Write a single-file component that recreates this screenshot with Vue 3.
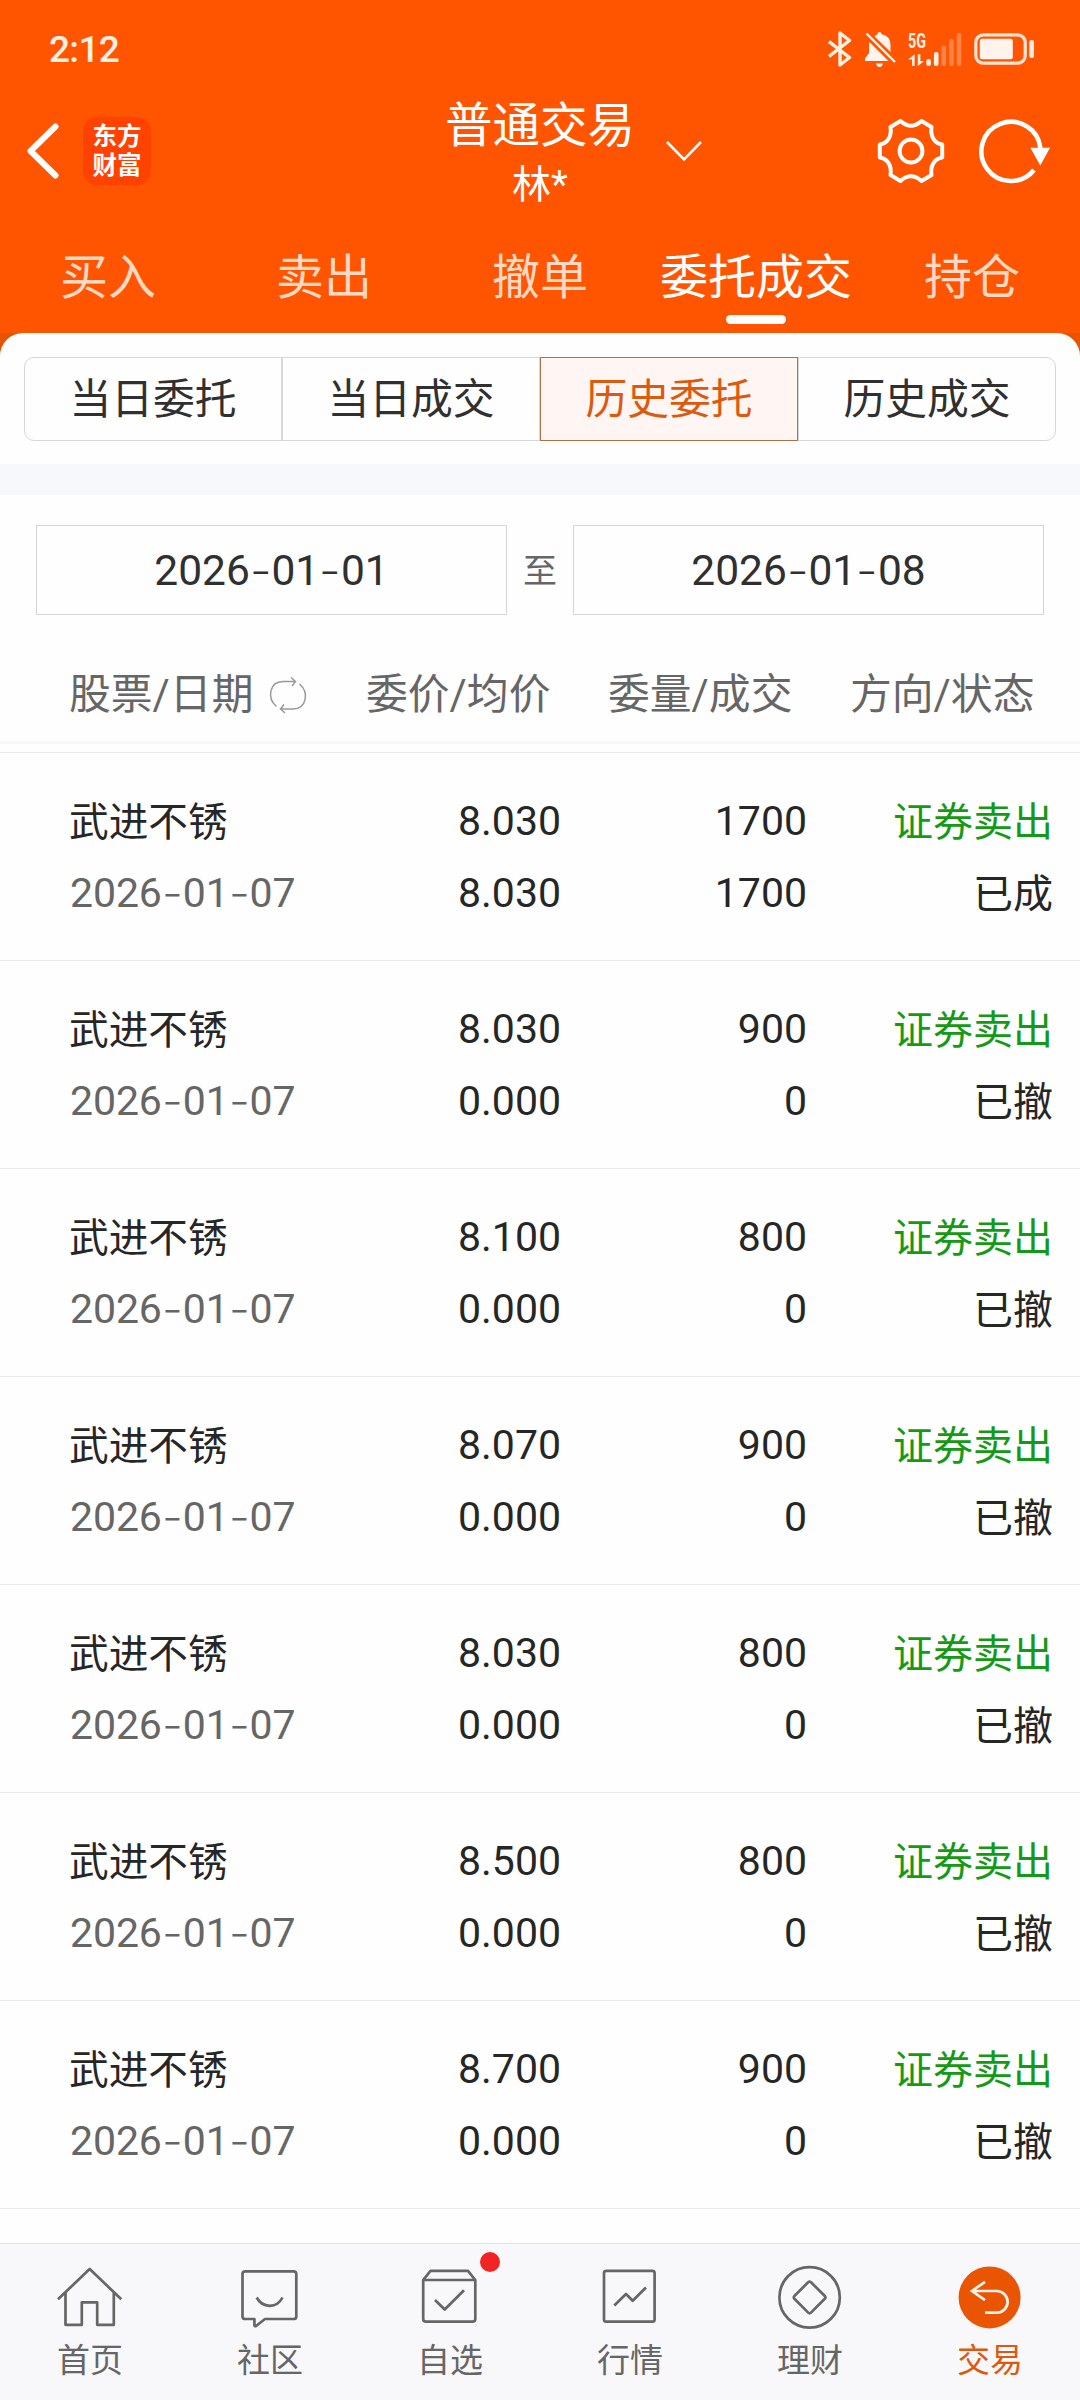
<template>
  <div class="page">
    <header class="header">
      <div class="status-bar">
        <span class="time">2:12</span>
        <div class="status-icons">
          <svg width="24" height="36" viewBox="0 0 24 36" class="line-icon">
            <path d="M1 10.5 L21.5 26.5 L12 34 V2 L21.5 9.5 L1 25.5" />
          </svg>
          <svg width="31" height="36" viewBox="0 0 31 36" class="bell">
            <path
              d="M4.5 11 L23.5 30 H0 V27.5 L4 22 V14 Q4 12.5 4.5 11 Z M9.5 5.6 Q11 3.6 12.5 3.3 Q12.5 1 14.5 1 Q16.5 1 16.6 3.3 Q25.5 5 25.5 14 V21 Z"
            />
            <path d="M11 32.5 H18 Q17 36 14.5 36 Q12 36 11 32.5 Z" />
            <path d="M1.5 2.5 L30 31" class="slash" />
          </svg>
          <svg width="53" height="36" viewBox="0 0 53 36" class="signal">
            <text x="0" y="17" textLength="18" lengthAdjust="spacingAndGlyphs">5G</text>
            <path d="M0 28.5 L6.6 23.3 V35 H4 V28.5 Z M16.3 30 L9.8 35 V23.3 H12.4 V30 Z" />
            <rect
              v-for="(bar, i) in signalBars"
              :key="i"
              :x="18.3 + i * 7.6"
              :y="35 - bar"
              width="4.6"
              :height="bar"
              rx="2"
              :opacity="i < 2 ? 1 : 0.3"
            />
          </svg>
          <svg width="60" height="32" viewBox="0 0 60 32">
            <rect x="1.8" y="1.8" width="49.4" height="28.4" rx="7.5" class="battery" />
            <rect x="5.8" y="5.8" width="33" height="20.4" rx="2.5" fill="#fff3ee" />
            <rect x="55.3" y="7" width="4.7" height="18" rx="2" fill="#ffe9dd" />
          </svg>
        </div>
      </div>

      <div class="nav-bar">
        <div class="nav-side">
          <svg width="34" height="58" viewBox="0 0 34 58" class="back">
            <path d="M29.5 4.5 L4.5 29 L29.5 53.5" />
          </svg>
          <div class="logo">
            <span>东方</span>
            <span>财富</span>
          </div>
        </div>
        <div class="title">
          <h1>普通交易</h1>
          <p>林*</p>
        </div>
        <div class="nav-side">
          <svg width="38" height="22" viewBox="0 0 38 22" class="chevron">
            <path d="M2 2 L19 19.5 L36 2" />
          </svg>
          <svg width="72" height="72" viewBox="-36 -36 72 72" class="gear">
            <path
              d="M-10.5 -30 Q0 -20.5 10.5 -30 L20.5 -24 C19 -14 24 -7.5 31.2 -6.5 V6.5 C24 7.5 19 14 20.5 24 L10.5 30 Q0 20.5 -10.5 30 L-20.5 24 C-19 14 -24 7.5 -31.2 6.5 V-6.5 C-24 -7.5 -19 -14 -20.5 -24 Z"
            />
            <circle r="11.4" />
          </svg>
          <svg width="72" height="66" viewBox="-32 -33 72 66" class="reload">
            <path d="M23 19 A29.6 29.6 0 1 1 29.4 -3" />
            <path d="M19.3 -3.3 H39 L29.3 14.5 Z" class="tip" />
          </svg>
        </div>
      </div>

      <nav class="tabs">
        <div
          v-for="tab in tabs"
          :key="tab"
          class="tab"
          :class="{ active: tab === activeTab }"
          @click="activeTab = tab"
        >
          {{ tab }}
        </div>
      </nav>
    </header>

    <main class="panel-wrap">
      <div class="segment">
        <button
          v-for="item in segments"
          :key="item"
          class="segment-item"
          :class="{ active: item === activeSegment }"
          @click="activeSegment = item"
        >
          {{ item }}
        </button>
      </div>
    </main>

    <div class="divider"></div>

    <section class="dates">
      <div class="date-box">
        <template v-for="(part, i) in startDate" :key="i">
          <i v-if="i" class="dash">-</i>{{ part }}
        </template>
      </div>
      <span class="to">至</span>
      <div class="date-box">
        <template v-for="(part, i) in endDate" :key="i">
          <i v-if="i" class="dash">-</i>{{ part }}
        </template>
      </div>
    </section>

    <div class="list-head">
      <span class="head-date">
        股票/日期
        <svg width="40" height="40" viewBox="0 0 40 40" class="swap">
          <path d="M8.5 31.5 C-1.5 23 1.5 6.8 15 6.5 H27.5 M23 2.5 L27.5 6.5 L24 11" />
          <path d="M31.5 9 C41.5 17.5 38.5 33.7 25 34 H12.5 M17 38 L12.5 34 L16 29.5" />
        </svg>
      </span>
      <span>委价/均价</span>
      <span>委量/成交</span>
      <span>方向/状态</span>
    </div>

    <ul class="list">
      <li v-for="(order, i) in orders" :key="i" class="row">
        <div class="cell name">
          <span class="cn">武进不锈</span>
          <span class="date">
            <template v-for="(part, j) in orderDate" :key="j">
              <i v-if="j" class="dash">-</i>{{ part }}
            </template>
          </span>
        </div>
        <div class="cell">
          <span>{{ order.price }}</span>
          <span>{{ order.avg }}</span>
        </div>
        <div class="cell">
          <span>{{ order.amount }}</span>
          <span>{{ order.deal }}</span>
        </div>
        <div class="cell state">
          <span class="cn sell">证券卖出</span>
          <span class="cn">{{ order.status }}</span>
        </div>
      </li>
    </ul>

    <footer class="tab-bar">
      <div
        v-for="item in footer"
        :key="item.label"
        class="bar-item"
        :class="{ active: item.active }"
      >
        <div class="bar-icon">
          <svg width="72" height="72" viewBox="0 0 72 72">
            <circle v-if="item.circle" cx="35.6" cy="35.4" :r="item.circle" class="disc" />
            <path :d="item.path" />
          </svg>
          <i v-if="item.dot" class="dot"></i>
        </div>
        <span>{{ item.label }}</span>
      </div>
    </footer>
  </div>
</template>

<script setup>
import { ref } from 'vue'

const signalBars = [7, 14, 20.5, 27, 33]

const tabs = ['买入', '卖出', '撤单', '委托成交', '持仓']
const activeTab = ref('委托成交')

const segments = ['当日委托', '当日成交', '历史委托', '历史成交']
const activeSegment = ref('历史委托')

const startDate = '2026-01-01'.split('-')
const endDate = '2026-01-08'.split('-')
const orderDate = '2026-01-07'.split('-')

const orders = [
  { price: '8.030', avg: '8.030', amount: 1700, deal: 1700, status: '已成' },
  { price: '8.030', avg: '0.000', amount: 900, deal: 0, status: '已撤' },
  { price: '8.100', avg: '0.000', amount: 800, deal: 0, status: '已撤' },
  { price: '8.070', avg: '0.000', amount: 900, deal: 0, status: '已撤' },
  { price: '8.030', avg: '0.000', amount: 800, deal: 0, status: '已撤' },
  { price: '8.500', avg: '0.000', amount: 800, deal: 0, status: '已撤' },
  { price: '8.700', avg: '0.000', amount: 900, deal: 0, status: '已撤' },
]

const footer = [
  {
    label: '首页',
    path: 'M4 37.3 L35.7 7 L67.3 37.3 M11.5 30.5 V62.8 H27.8 V40.4 H43.2 V62.8 H59.8 V30.5',
  },
  {
    label: '社区',
    path: 'M11.5 9.4 H59.5 Q62.3 9.4 62.3 12 V54.4 Q62.3 57 59.5 57 H31 L22 64 Q20.4 64.6 20.4 63 V57 H11.5 Q8.5 57 8.5 54.4 V12 Q8.5 9.4 11.5 9.4 Z M22.7 35.5 Q27 43.6 35.7 43.8 Q44.4 43.6 48.5 35.5',
  },
  {
    label: '自选',
    dot: true,
    path: 'M9.2 18 L16.5 8.8 H54 L61.3 18 V57 Q61.3 59.7 58.6 59.7 H12 Q9.2 59.7 9.2 57 Z H61.3 M21 38 L30.7 47.5 L50 28.3',
  },
  {
    label: '行情',
    path: 'M12.2 8.8 H58.5 Q60.6 8.8 60.6 11 V57.5 Q60.6 59.7 58.5 59.7 H12.2 Q10 59.7 10 57.5 V11 Q10 8.8 12.2 8.8 Z M20.3 43.5 L32 32 L38.7 38.7 L52 25.5',
  },
  {
    label: '理财',
    circle: 30.2,
    path: 'M34.2 20.2 Q35.6 19 37 20.2 L50.8 34 Q52 35.4 50.8 36.8 L37 50.6 Q35.6 52 34.2 50.6 L20.4 36.8 Q19.2 35.4 20.4 34 Z',
  },
  {
    label: '交易',
    circle: 31,
    active: true,
    path: 'M31 19.8 L18 29 L31 38.2 M18 29 H42.8 A10.85 10.85 0 0 1 42.8 50.7 H31',
  },
]
</script>

<style>
body {
  margin: 0;
}
</style>

<style scoped>
.page {
  display: flex;
  flex-direction: column;
  width: 1080px;
  height: 2400px;
  overflow: hidden;
  background: #fefefe;
  color: #262626;
  font-family: Roboto, 'Noto Sans CJK SC', sans-serif;
}
svg {
  display: block;
  flex: none;
  fill: none;
}
.header {
  height: 333px;
  background: #ff5500;
  color: #fff;
}

/* 状态栏 */
.status-bar {
  display: flex;
  align-items: center;
  justify-content: space-between;
  height: 98px;
  padding: 0 46px 0 49px;
}
.time {
  font-size: 37px;
  font-weight: 500;
  letter-spacing: -0.7px;
  color: #fff0e4;
}
.status-icons {
  display: flex;
  align-items: center;
  gap: 12.6px;
}
.line-icon {
  stroke: #fff0e4;
  stroke-width: 3.4;
  stroke-linejoin: round;
}
.bell {
  fill: #fff3ee;
}
.slash {
  stroke: #fff0e4;
  stroke-width: 2.4;
}
.signal {
  overflow: visible;
  fill: #fff0e4;
  font-size: 20px;
  font-weight: 700;
}
.battery {
  stroke: #ffe3d3;
  stroke-width: 3.2;
}

/* 标题栏 */
.nav-bar {
  display: grid;
  grid-template-columns: 1fr auto 1fr;
  height: 116px;
}
.nav-side {
  display: flex;
  align-items: center;
  height: 106px;
}
.back {
  margin-left: 26px;
  stroke: #fff;
  stroke-width: 6;
  stroke-linecap: round;
  stroke-linejoin: round;
}
.logo {
  display: flex;
  flex-direction: column;
  align-items: center;
  justify-content: center;
  width: 68px;
  height: 68px;
  margin-left: 23px;
  border-radius: 14px;
  background: #ff4200;
  font-size: 24.5px;
  font-weight: 700;
  line-height: 29px;
}
.title {
  text-align: center;
}
h1 {
  margin: 0;
  font-size: 47.5px;
  font-weight: 400;
  line-height: 56px;
}
p {
  margin: 0;
  font-size: 39px;
  line-height: 62px;
}
.chevron {
  margin-left: 30px;
  stroke: #fff;
  stroke-width: 2.6;
}
.gear {
  margin-left: auto;
  stroke: #fff;
  stroke-width: 4;
  stroke-linejoin: round;
}
.reload {
  margin: 0 29px 0 32px;
  stroke: #fff;
  stroke-width: 4.6;
}
.tip {
  fill: #fff;
  stroke: none;
}

/* 顶部标签 */
.tabs {
  display: grid;
  grid-template-columns: repeat(5, 1fr);
}
.tab {
  display: flex;
  flex-direction: column;
  align-items: center;
  padding-top: 31px;
  font-size: 48px;
  line-height: 66px;
  white-space: nowrap;
  color: #ffd9c4;
}
.tab.active {
  color: #fff;
}
.tab.active::after {
  content: '';
  width: 60px;
  height: 9px;
  margin-top: 4px;
  border-radius: 5px;
  background: #fff;
}

/* 二级切换，圆角外露出深橙色 */
.panel-wrap {
  background: linear-gradient(#e65400 26px, #fefefe 26px);
}
.segment {
  display: flex;
  padding: 24px 24px 23px;
  border-radius: 23px 23px 0 0;
  background: #fefefe;
}
.segment-item {
  flex: 1;
  height: 84px;
  padding: 2px 0 0;
  border: 1px solid #d5d7d8;
  background: #fefefe;
  color: #303030;
  font-family: inherit;
  font-size: 41.8px;
  line-height: 80px;
}
.segment-item:first-child {
  border-radius: 10px 0 0 10px;
}
.segment-item:last-child {
  border-radius: 0 10px 10px 0;
}
.segment-item.active {
  border-color: #b0704a;
  background: #fff6f3;
  color: #dc5a10;
}
.divider {
  height: 31px;
  background: #f6f8fb;
}

/* 日期选择 */
.dates {
  display: flex;
  align-items: center;
  justify-content: space-between;
  padding: 30px 36px 0;
}
.date-box {
  box-sizing: border-box;
  display: flex;
  justify-content: center;
  width: 471px;
  height: 90px;
  border: 1px solid #d4d6d7;
  color: #303030;
  font-size: 42.5px;
  line-height: 89px;
}
.dash {
  display: inline-block;
  width: 0.51em;
  font-family: Inter, sans-serif;
  font-style: normal;
  font-weight: 300;
  text-align: center;
  transform: scaleX(1.12);
}
.to {
  margin-top: -3px;
  color: #666;
  font-size: 34px;
}

/* 列表 */
.list-head {
  display: grid;
  grid-template-columns: 297px 242px 242px 1fr;
  height: 126px;
  padding-left: 69px;
  border-bottom: 3px solid #f5f8f8;
  color: #666;
  font-size: 41.8px;
  line-height: 159px;
  white-space: nowrap;
}
.head-date {
  display: flex;
  align-items: center;
  height: 159px;
  gap: 15px;
}
.swap {
  stroke: #999;
  stroke-width: 1.5;
}
.list {
  flex: 1;
  margin: 8px 0 0;
  padding: 0;
  border-top: 1px solid #ebebeb;
  list-style: none;
}
.row {
  display: grid;
  grid-template-columns: 260px 231px 246px 246px;
  height: 175px;
  padding: 32px 0 0 70px;
  border-bottom: 1px solid #ebebeb;
}
.cell {
  display: flex;
  flex-direction: column;
  align-items: flex-end;
  font-size: 41px;
  line-height: 72px;
}
.name {
  align-items: flex-start;
}
.cn {
  height: 71px;
  padding-top: 1px;
  font-size: 40px;
  line-height: 73px;
}
.name .cn {
  margin-left: -1px;
  font-size: 39.7px;
}
.date {
  display: flex;
  color: #666;
  letter-spacing: -0.1px;
}
.sell {
  color: #149a14;
}

/* 底部导航 */
.tab-bar {
  display: grid;
  grid-template-columns: repeat(6, 1fr);
  box-sizing: border-box;
  height: 157px;
  border-top: 1px solid #e1e2e4;
  background: #f8f8fa;
}
.bar-item {
  display: flex;
  flex-direction: column;
  align-items: center;
  padding-top: 18px;
  color: #666;
  font-size: 33px;
  line-height: 54px;
}
.bar-icon {
  position: relative;
  stroke: #666;
  stroke-width: 2.7;
  stroke-linejoin: round;
}
.dot {
  position: absolute;
  top: -10px;
  right: -14px;
  width: 20px;
  height: 20px;
  border-radius: 50%;
  background: #f22323;
}
.bar-item.active {
  color: #dc5a10;
}
.active .bar-icon {
  stroke: #fff3e8;
  stroke-linejoin: miter;
}
.active .disc {
  fill: #ea5504;
  stroke: none;
}
</style>
